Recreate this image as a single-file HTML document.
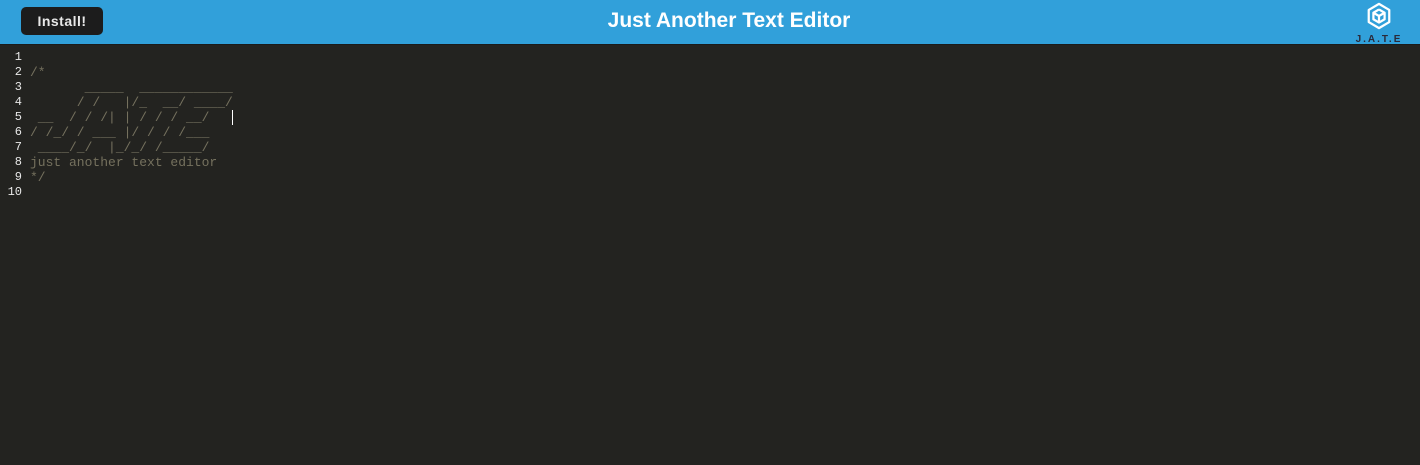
<!DOCTYPE html>
<html><head><meta charset="utf-8"><style>
html,body{margin:0;padding:0;width:1420px;height:465px;overflow:hidden;background:#232320;}
.hdr{position:absolute;left:0;top:0;width:1420px;height:44px;background:#31a0da;border-bottom:1px solid #1b1b1b;}
.btn{position:absolute;left:21px;top:7px;width:82px;height:28px;background:#1c1c1c;border-radius:5px;color:#e8e8e8;font:bold 14px "Liberation Sans",sans-serif;text-align:center;line-height:28px;letter-spacing:0.5px;}
.title{position:absolute;left:0;width:1458px;top:0;text-align:center;color:#fff;font:bold 21px "Liberation Sans",sans-serif;line-height:41px;}
.logo{position:absolute;left:1351px;top:2px;width:56px;text-align:center;}
.logo span{display:block;font:bold 10px "Liberation Sans",sans-serif;color:#2a2a3a;letter-spacing:2px;margin-top:-1px;}
.ed{position:absolute;top:50px;left:0;width:400px;height:200px;font:13px/15px "Liberation Mono",monospace;white-space:pre;}
.gut{position:absolute;top:0;left:0;width:22px;text-align:right;color:#e8e8e8;font-size:12px;}
.code{position:absolute;top:0;left:30px;color:#75715e;}
.cur{position:absolute;left:232px;top:110px;width:1px;height:15px;background:#fff;}
</style></head><body>
<div class="hdr">
<div class="btn">Install!</div>
<div class="title">Just Another Text Editor</div>
<div class="logo"><svg width="28" height="28" viewBox="0 0 30 30" fill="none" stroke="#fff" stroke-width="2.4" stroke-linejoin="round"><path d="M15 2 L26 8.5 V21.5 L15 28 L4 21.5 V8.5 Z"/><path d="M15 8 L21 11.5 V18.5 L15 22 L9 18.5 V11.5 L15 8" /><path d="M9 11.5 L15 15 L21 11.5 M15 15 V22"/></svg><span>J.A.T.E</span></div>
</div>
<div class="ed"><div class="gut">1
2
3
4
5
6
7
8
9
10</div><div class="code">
/*
       _____  ____________
      / /   |/_  __/ ____/
 __  / / /| | / / / __/
/ /_/ / ___ |/ / / /___
 ____/_/  |_/_/ /_____/
just another text editor
*/</div></div>
<div class="cur"></div>
</body></html>
